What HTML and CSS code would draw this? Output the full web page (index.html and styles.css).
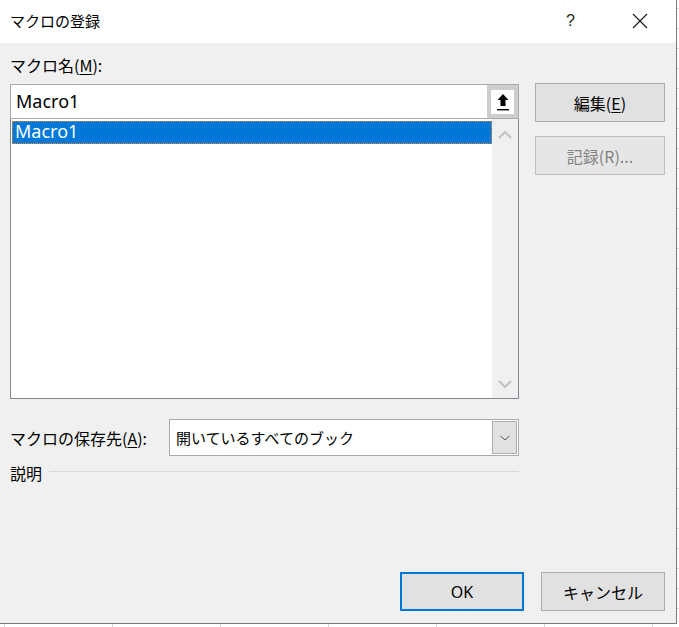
FILE: index.html
```html
<!DOCTYPE html>
<html lang="ja">
<head>
<meta charset="utf-8">
<link rel="stylesheet" href="styles.css">
</head>
<body>
<div class="desk">
  <div class="dialog">
    <div class="titlebar">
      <span class="title">マクロの登録</span>
      <span class="help">?</span>
      <span class="close"><svg width="16" height="16" viewBox="0 0 16 16"><path d="M1 1L15 15M15 1L1 15" stroke="#111" stroke-width="1.1" fill="none"/></svg></span>
    </div>
    <div class="body">
      <div class="main">
        <div class="left">
          <div class="label">マクロ名(<u>M</u>):</div>
          <div class="namebox">
            <span class="nametext">Macro1</span>
            <span class="collapse"><span class="collapse-in"><svg width="14" height="18" viewBox="0 0 14 18"><path d="M7 1L1.5 7H4.5V13H9.5V7H12.5Z" fill="#000"/><rect x="1" y="16" width="12" height="1.4" fill="#000"/></svg></span></span>
          </div>
          <div class="list">
            <div class="items">
              <div class="item sel">Macro1</div>
            </div>
            <div class="vscroll">
              <svg width="14" height="10" viewBox="0 0 14 10"><path d="M1 8L7 2L13 8" stroke="#c2c2c2" stroke-width="2.2" fill="none"/></svg>
              <svg width="14" height="10" viewBox="0 0 14 10"><path d="M1 2L7 8L13 2" stroke="#c2c2c2" stroke-width="2.2" fill="none"/></svg>
            </div>
          </div>
          <div class="saverow">
            <span class="label">マクロの保存先(<u>A</u>):</span>
            <div class="combo">
              <span class="combotext">開いているすべてのブック</span>
              <span class="dropbtn"><svg width="12" height="8" viewBox="0 0 12 8"><path d="M1.5 2L6 6L10.5 2" stroke="#555" stroke-width="1" fill="none"/></svg></span>
            </div>
          </div>
          <div class="descrow">
            <span class="label">説明</span>
            <span class="rule"></span>
          </div>
        </div>
        <div class="right">
          <div class="btn">編集(<u>E</u>)</div>
          <div class="btn disabled">記録(R)...</div>
        </div>
      </div>
      <div class="footer">
        <div class="btn ok">OK</div>
        <div class="btn">キャンセル</div>
      </div>
    </div>
  </div>
</div>
</body>
</html>
```

FILE: styles.css
```css
html, body {
  margin: 0;
  padding: 0;
  background: #ffffff;
  width: 679px;
  height: 627px;
  overflow: hidden;
  font-family: "Noto Sans CJK JP", "Noto Sans", sans-serif;
  color: #000;
}
.desk {
  width: 679px;
  height: 627px;
  background-color: #fff;
  background-image:
    linear-gradient(#d4d4d4 1px, transparent 1px),
    linear-gradient(90deg, #d4d4d4 1px, transparent 1px);
  background-size: 100% 20px, 108px 100%;
  background-position: 0 8px, 4px 0;
}
.dialog {
  width: 677px;
  height: 624px;
  box-sizing: border-box;
  border-right: 1px solid #7a7a7a;
  border-bottom: 1px solid #7a7a7a;
  background: #f0f0f0;
  display: flex;
  flex-direction: column;
}
.titlebar {
  height: 43px;
  flex: none;
  background: #fff;
  display: flex;
  align-items: center;
  padding-left: 10px;
  font-size: 15px;
}
.title { flex: 1; padding-bottom: 3px; }
.help { width: 16px; margin-right: 50px; font-size: 16px; font-family: "Liberation Sans", sans-serif; color: #222; padding-bottom: 2px; }
.close { width: 16px; margin-right: 28px; display: flex; padding-bottom: 2px; }
.body {
  flex: 1;
  display: flex;
  flex-direction: column;
  padding: 11px 11px 12px 10px;
}
.main { display: flex; flex: 1; }
.left { width: 509px; display: flex; flex-direction: column; }
.label { font-size: 16px; line-height: 22px; color: #000; }
.label u { text-decoration-thickness: 1px; text-underline-offset: 2px; }
.left > .label { margin-bottom: 8px; }
.namebox {
  height: 35px;
  box-sizing: border-box;
  border: 1px solid #ababab;
  background: #fff;
  display: flex;
  align-items: center;
}
.nametext { flex: 1; padding-left: 5px; font-size: 18px; font-family: "Noto Sans", sans-serif; padding-bottom: 1px; }
.collapse {
  width: 31px;
  height: 33px;
  background: #cdcdcd;
  display: flex;
  align-items: center;
  justify-content: center;
}
.collapse-in {
  width: 23px;
  height: 24px;
  background: #fff;
  display: flex;
  align-items: center;
  justify-content: center;
}
.list {
  height: 280px;
  box-sizing: border-box;
  border: 1px solid #828790;
  border-top: none;
  background: #fff;
  display: flex;
}
.items { flex: 1; padding: 2px 0 2px 1px; }
.item {
  height: 23px;
  box-sizing: border-box;
  padding-left: 3px;
  font-size: 18px;
  line-height: 21px;
  font-family: "Noto Sans", sans-serif;
}
.item.sel { background: #0078d7; color: #fff; outline: 1px dotted #f08a24; outline-offset: -1px; }
.vscroll {
  width: 26px;
  background: #f0f0f0;
  display: flex;
  flex-direction: column;
  justify-content: space-between;
  align-items: center;
  padding: 11px 0 9px;
}
.saverow {
  display: flex;
  align-items: center;
  margin-top: 20px;
}
.saverow .label { width: 159px; }
.combo {
  flex: 1;
  height: 37px;
  box-sizing: border-box;
  border: 1px solid #ababab;
  background: #fff;
  display: flex;
  align-items: center;
  padding-right: 1px;
}
.combotext { flex: 1; padding-left: 6px; font-size: 15px; padding-bottom: 1px; }
.dropbtn {
  width: 25px;
  height: 33px;
  box-sizing: border-box;
  border: 1px solid #adadad;
  background: #e1e1e1;
  display: flex;
  align-items: center;
  justify-content: center;
}
.descrow { display: flex; align-items: center; margin-top: 6px; }
.descrow .rule { flex: 1; height: 1px; background: #d8d8d8; margin-left: 7px; margin-top: -3px; }
.right {
  margin-left: 16px;
  display: flex;
  flex-direction: column;
  gap: 14px;
  padding-top: 29px;
}
.btn {
  width: 130px;
  height: 39px;
  box-sizing: border-box;
  border: 1px solid #adadad;
  background: #e1e1e1;
  display: flex;
  align-items: center;
  justify-content: center;
  font-size: 16px;
  color: #000;
}
.btn u { text-decoration-thickness: 1px; text-underline-offset: 2px; }
.btn.disabled { color: #838383; border-color: #bfbfbf; background: #e6e6e6; }
.footer {
  display: flex;
  justify-content: flex-end;
  gap: 17px;
}
.footer .btn { width: 124px; }
.btn.ok { border: 2px solid #0078d7; font-family: "Noto Sans", sans-serif; font-size: 16px; }
```
